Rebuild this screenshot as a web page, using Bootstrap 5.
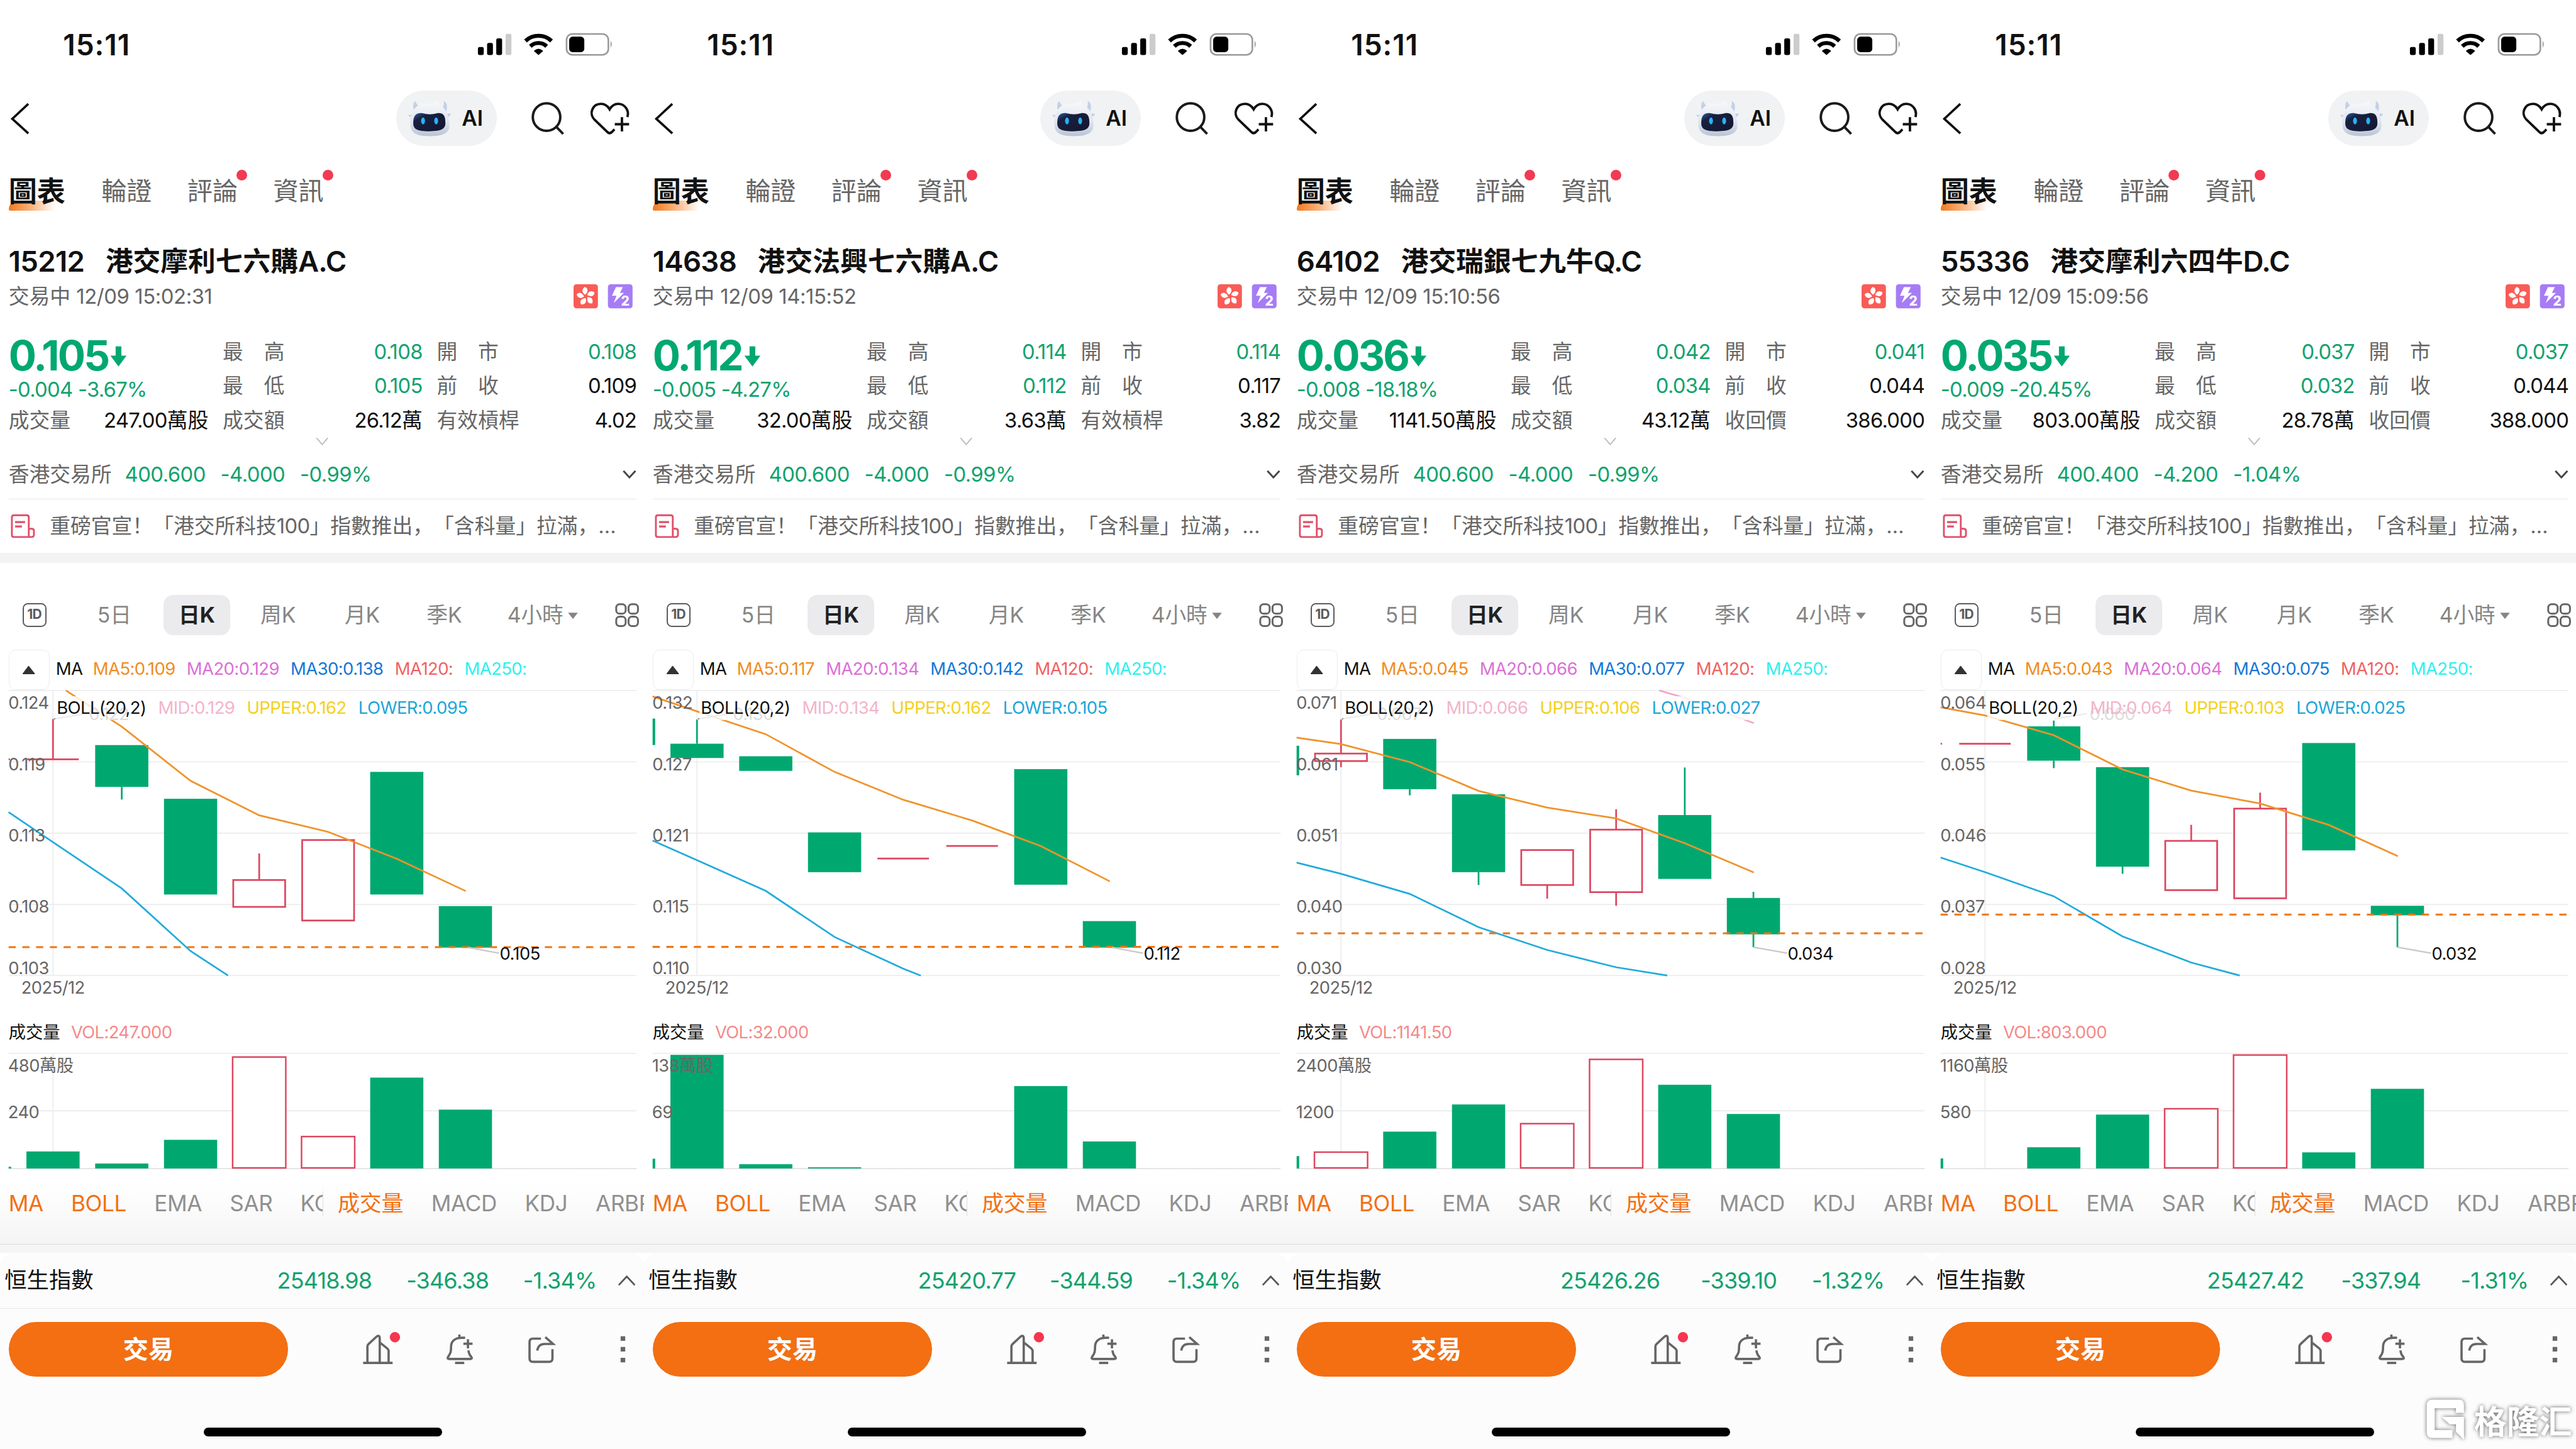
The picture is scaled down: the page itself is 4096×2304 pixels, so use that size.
<!DOCTYPE html>
<html lang="zh-Hant">
<head>
<meta charset="utf-8">
<meta name="viewport" content="width=device-width, initial-scale=1">
<title>交易</title>
<link href="https://cdn.jsdelivr.net/npm/bootstrap@5.3.0/dist/css/bootstrap.min.css" rel="stylesheet">
<style>
/* 1rem = 10 design units */
html{font-size:9.11032px}
body{font-family:Inter,"Noto Sans CJK TC",sans-serif;font-size:3.6rem;line-height:1;color:#111;background:#fff;overflow:hidden}
svg{display:block;flex:none;overflow:visible}
.phone{height:252.9rem;overflow:hidden;white-space:nowrap}
.num{letter-spacing:-.022em}
.up-green{color:#12a36e}
.price-green{color:#00a870}
.muted6{color:#666}
.statusbar{height:15.6rem;padding:0 5.3rem 0 11rem}
.clock{font-size:5.05rem;font-weight:600;letter-spacing:.022em}
.topnav{height:10.1rem;padding:0 2.3rem 0 1.6rem}
.ai-pill{width:17.5rem;height:9.6rem;background:#f0f2f4;font-size:3.7rem;font-weight:600;margin-right:5.9rem;padding-left:1.9rem}
.pagetabs{height:15.4rem;padding-left:1.5rem;gap:6.2rem;font-size:4.4rem;color:#666}
.pagetabs .current{font-size:4.95rem;font-weight:700;color:#111;margin-right:.1rem}
.pagetabs .current::before{content:"";position:absolute;left:0;bottom:-.9rem;width:8.2rem;height:1.8rem;border-radius:1.6rem 0 0 .3rem;background:linear-gradient(90deg,#f27a1e,#f9b681 50%,rgba(255,255,255,0));z-index:-1}
.pagetabs .current{z-index:0}
.reddot{position:absolute;width:1.9rem;height:1.9rem;border-radius:50%;background:#f23a52;right:-1.7rem;top:-1.6rem}
.titleline{height:9rem;padding-left:1.5rem;font-size:4.8rem;font-weight:700}
.titleline .code{font-weight:600;font-size:5rem;letter-spacing:-.015em;margin-right:3.7rem}
.titleline .lat{font-weight:600;font-size:5rem;letter-spacing:-.02em}
.subline{height:3.2rem;padding:0 2rem 0 1.5rem}
.subline .num{letter-spacing:-.012em}
.quote{padding:5.15rem 1.3rem 0 1.5rem;gap:2.5rem}
.quote>div{flex:1 1 0;min-width:0}
.qcell{height:5.95rem}
.bigprice{height:7.3rem;font-size:7.2rem;font-weight:700;letter-spacing:-.043em}
.change{height:4.6rem}
.more{height:1.3rem}
.underlying{height:9.55rem;margin:0 1.3rem 0 1.5rem;padding-top:1.05rem;border-bottom:.2rem solid #e8e8e8}
.underlying .num{letter-spacing:-.016em}
.newsline{height:9.35rem;padding-left:2rem;font-family:Inter,"Noto Sans CJK SC",sans-serif;text-spacing-trim:space-all}
.band{height:1.8rem;background:#f3f3f3}
.periods{height:15.1rem;padding:5.6rem .9rem 2.6rem 3.9rem;color:#858585;font-size:3.7rem}
.periods>*{flex:none}
.periods .active{width:11.6rem;height:6.95rem;border-radius:1.7rem;background:#ebebed;color:#222;font-weight:700}
.oned{width:4.2rem;height:4.2rem;border:.3rem solid #5c5c5c;border-radius:.9rem;font-size:2.3rem;font-weight:700;color:#5c5c5c;letter-spacing:-.03em}
.legendrow{height:7.05rem;padding-left:1.5rem;font-size:3.02rem;gap:2rem}
.legendrow>span:not(.fold){margin-top:-.25rem}
.legendrow .fold{width:7.15rem;height:7.05rem;border:.18rem solid #ececec;border-radius:1.2rem;margin-right:-.9rem}
.bollrow{position:absolute;left:9.7rem;top:1.1rem;right:1.3rem;height:4.15rem;padding-left:.2rem;background:rgba(255,255,255,.8);font-size:3.02rem;gap:2.1rem}
.volhead{height:7.7rem;padding:.7rem 0 0 1.5rem;font-size:3rem;gap:1.9rem}
.c-ma5{color:#ee8d22}.c-ma20{color:#da70d6}.c-ma30{color:#1577d6}.c-ma120{color:#f06262}.c-ma250{color:#30efef}
.c-mid{color:#f3b4ca}.c-upper{color:#f4d020}.c-lower{color:#1ca6d8}.c-vol{color:#f48a8a}
.plot text{font-family:Inter,"Noto Sans CJK TC",sans-serif;font-size:30px;letter-spacing:-.6px;fill:#666}
.studies{height:12.6rem;padding:0 0 1.4rem 1.5rem;font-size:3.85rem;color:#909090;background:linear-gradient(180deg,#fff,#fdfdfd 35%,#f4f4f4);letter-spacing:-.01em}
.studies .left-list{flex:none;width:54.95rem;height:4.4rem;border-right:.2rem solid #ddd}
.studies .on{color:#f37012}
.studies span{flex:none}
.gap-strip{height:1.6rem;background:#f5f5f5;border-top:.15rem solid #dcdcdc}
.sheet{background:#fdfcfd;height:34.2rem;border-radius:2.4rem 2.4rem 0 0}
.indexbar{height:9.7rem;padding:0 1.4rem 0 .8rem;font-size:3.88rem;border-bottom:.15rem solid #e8e8e8}
.indexbar .num{font-size:3.95rem;text-align:right}
.actions{height:14.3rem;padding:0 3.2rem 0 1.5rem}
.trade{width:48.8rem;height:9.5rem;border-radius:4.75rem;background:#f36f12;color:#fff;font-size:4.4rem;font-weight:700;line-height:1;padding:0;border:0}
.homebar{width:41.6rem;height:1.55rem;border-radius:.8rem;background:#000;margin:6.45rem auto 0 35.6rem}
.wm{position:absolute;left:423.2rem;top:243.8rem;color:#fff;font:700 5.7rem/1 "Noto Sans CJK SC",sans-serif;gap:1.4rem;filter:drop-shadow(0 0 .35rem rgba(0,0,0,.62))}
</style>
</head>
<body>
<main class="position-relative">
<div class="row g-0 flex-nowrap" id="board"></div>
<div class="wm d-flex align-items-center">
<svg style="width:7.2rem;height:8rem" viewBox="4232 2440 72 80"><path fill="#fff" d="M4246 2445H4292Q4301 2445 4301 2454V2468H4287V2460H4250V2498H4281V2512H4246Q4236 2512 4236 2502V2455Q4236 2445 4246 2445ZM4262 2475H4301V2515L4287 2501V2488H4276Z"/></svg>
<span>格隆汇</span></div>
</main>
<script>
const X=[92.5,212.5,332.6,452.4,572.7,692.5,812.3];
const G='#00a870',R='#dc4660';
/* candle: [kind, top, bottom, high, low]; kind g = filled, r = hollow, d = flat */
const stocks=[
{code:'15212',cn:'港交摩利七六購',lat:'A.C',time:'12/09 15:02:31',px:'0.105',chg:'-0.004',pct:'-3.67%',hi:'0.108',open:'0.108',lo:'0.105',prev:'0.109',vol:'247.00',amt:'26.12',lab:'有效槓桿',lv:'4.02',
 und:['400.600','-4.000','-0.99%'],ma:['0.109','0.129','0.138'],boll:['0.129','0.162','0.095'],axis:['0.124','0.119','0.113','0.108','0.103'],
 sl:['d',1325.6],k:[['d',1325.6,1325.6,1255.3,0],['g',1300.8,1373.8,0,1395.8],['g',1394.5,1561.6],['r',1536.3,1583.2,1490,0],['r',1466.5,1607],['g',1347.6,1561.6],['g',1581.8,1654.3]],
 dash:1653.4,low:['0.105',817,1654],high:['0.122',155,94],
 m5:'115,1205.5 212.5,1268.6 332.6,1363.2 452.4,1423.4 572.7,1452.3 692.5,1499.1 813,1555.6',
 lw:'15,1417.9 92.5,1470.2 212.5,1551 332.6,1660.3 398,1703',
 vt:'247.000',va:['480萬股','240'],vs:2037,v:[['g',2010.3],['g',2031.4],['g',1990],['r',1845.5],['r',1984.3],['g',1881.4],['g',1937.3]],idx:['25418.98','-346.38','-1.34%']},
{code:'14638',cn:'港交法興七六購',lat:'A.C',time:'12/09 14:15:52',px:'0.112',chg:'-0.005',pct:'-4.27%',hi:'0.114',open:'0.114',lo:'0.112',prev:'0.117',vol:'32.00',amt:'3.63',lab:'有效槓桿',lv:'3.82',
 und:['400.600','-4.000','-0.99%'],ma:['0.117','0.134','0.142'],boll:['0.134','0.162','0.105'],axis:['0.132','0.127','0.121','0.115','0.110'],
 sl:['g',1254.5,1300.7],k:[['g',1298.4,1323.3,1256.2,0],['g',1320.3,1345.8],['g',1453.2,1522.6],['d',1498.8,1498.8],['d',1476.9,1476.9],['g',1342.8,1544.5],['g',1608,1654.2]],
 dash:1653,low:['0.112',817,1654],high:['0.130',155,94],
 m5:'15,1215.9 92.5,1242 212.5,1281.8 332.6,1347.6 452.4,1396.2 572.7,1432.4 692.5,1476.9 813,1538.6',
 lw:'15,1467.4 92.5,1501.8 212.5,1555.2 332.6,1635.8 452.4,1691 483,1703',
 vt:'32.000',va:['138萬股','69'],vs:2023,v:[['g',1841.7],['g',2032.6],['g',2038],0,0,['g',1896.2],['g',1992.9]],idx:['25420.77','-344.59','-1.34%']},
{code:'64102',cn:'港交瑞銀七九牛',lat:'Q.C',time:'12/09 15:10:56',px:'0.036',chg:'-0.008',pct:'-18.18%',hi:'0.042',open:'0.041',lo:'0.034',prev:'0.044',vol:'1141.50',amt:'43.12',lab:'收回價',lv:'386.000',
 und:['400.600','-4.000','-0.99%'],ma:['0.045','0.066','0.077'],boll:['0.066','0.106','0.027'],axis:['0.071','0.061','0.051','0.040','0.030'],
 sl:['g',1301.9,1353.5],k:[['r',1315.6,1328.6,1256.2,1339.3],['g',1290,1377.8,0,1388.5],['g',1386.7,1522.6,0,1545],['r',1484,1545,0,1568.8],['r',1448.4,1557.5,1412.8,1581.3],['g',1422.9,1534.4,1339.9,0],['g',1567.6,1631.1,1557,1653.6]],
 dash:1629.3,low:['0.034',812.5,1653.6],high:['0.067',155,94],
 m5:'15,1287.7 92.5,1299 212.5,1330.4 332.6,1380.8 452.4,1409.9 572.7,1428.9 692.5,1472.1 813,1523.2',
 lw:'15,1506 92.5,1525.5 212.5,1560.5 332.6,1618.6 452.4,1658.4 572.7,1688.6 662,1703',
 mid:'648,1205.5 692.5,1218.5 813,1262.5',
 vt:'1141.50',va:['2400萬股','1200'],vs:2018.4,v:[['r',2011.5],['g',1975.7],['g',1928.3],['r',1961.8],['r',1849.6],['g',1893.9],['g',1944.9]],idx:['25426.26','-339.10','-1.32%']},
{code:'55336',cn:'港交摩利六四牛',lat:'D.C',time:'12/09 15:09:56',px:'0.035',chg:'-0.009',pct:'-20.45%',hi:'0.037',open:'0.037',lo:'0.032',prev:'0.044',vol:'803.00',amt:'28.78',lab:'收回價',lv:'388.000',
 und:['400.400','-4.200','-1.04%'],ma:['0.043','0.064','0.075'],boll:['0.064','0.103','0.025'],axis:['0.064','0.055','0.046','0.037','0.028'],
 sl:['d',1298.4],k:[['d',1298.4,1298.4],['g',1268.1,1328,1258,1341],['g',1339.3,1513,0,1525.5],['r',1468,1554,1440,0],['r',1411.7,1568.2,1383.8,0],['g',1297.2,1484.6],['g',1581.3,1597.9,0,1653.6]],
 dash:1596.7,low:['0.032',812.5,1653.6],high:['0.060',275,214],
 m5:'15,1234.9 92.5,1249.1 212.5,1283.5 332.6,1343.4 452.4,1380.2 572.7,1402.8 692.5,1440.1 813,1494.7',
 lw:'15,1497 92.5,1522.6 212.5,1564.7 332.6,1634.7 452.4,1680.3 537,1703',
 vt:'803.000',va:['1160萬股','580'],vs:2022.5,v:[0,['g',2003],['g',1946],['r',1935.8],['r',1842],['g',2011.9],['g',1901]],idx:['25427.42','-337.94','-1.31%']}
];
const svg=(x,y,w,h,b,c='')=>`<svg class="${c}" style="width:${w/10}rem;height:${h/10}rem" viewBox="${x} ${y} ${w} ${h}" fill="none">${b}</svg>`;
const line=(x1,y1,x2,y2,c,w=2)=>`<line x1="${x1}" y1="${y1}" x2="${x2}" y2="${y2}" stroke="${c}" stroke-width="${w}"/>`;
function priceChart(s){
 let o='';
 [1205.5,1330,1454.5,1579,1703].forEach(y=>o+=line(15,y,1111,y,'#ededed',2));
 o+=line(92.5,1205,92.5,1703,'#ededed',2);
 if(s.sl[0]=='g')o+=`<rect x="15" y="${s.sl[1]}" width="4.5" height="${s.sl[2]-s.sl[1]}" fill="${G}"/>`;else o+=line(15,s.sl[1],17.5,s.sl[1],R,3);
 s.k.forEach((k,i)=>{const x=X[i],c=k[0]=='g'?G:R;
  if(k[3])o+=line(x,k[3],x,k[1],c,3);
  if(k[4])o+=line(x,k[2],x,k[4],c,3);
  if(k[0]=='g')o+=`<rect x="${x-46.4}" y="${k[1]}" width="92.8" height="${k[2]-k[1]}" fill="${G}"/>`;
  else if(k[0]=='r')o+=`<rect x="${x-45.3}" y="${k[1]}" width="90.6" height="${k[2]-k[1]}" stroke="${R}" stroke-width="3" fill="#fff"/>`;
  else o+=line(x-45,k[1],x+45,k[1],R,3);});
 o+=`<polyline points="${s.lw}" stroke="#22abdc" stroke-width="3"/><polyline points="${s.m5}" stroke="#f0932b" stroke-width="3"/>`;
 if(s.mid)o+=`<polyline points="${s.mid}" stroke="#f3a8c2" stroke-width="3"/>`;
 o+=`<line x1="15" y1="${s.dash}" x2="1108" y2="${s.dash}" stroke="#ea7818" stroke-width="3.4" stroke-dasharray="12.5 11.5"/>`;
 o+=line(s.low[1],s.low[2],871,1664,'#c8c8cc',2.5)+`<text x="872" y="1675.3" style="fill:#111">${s.low[0]}</text>`;
 o+=line(s.high[2],1255,s.high[1]-5,1246,'#999',2.5)+`<text x="${s.high[1]}" y="1257" style="fill:#555">${s.high[0]}</text>`;
 [1237,1344.5,1468.5,1592.8,1700.5].forEach((y,i)=>o+=`<text x="14.5" y="${y}">${s.axis[i]}</text>`);
 o+='<text x="37" y="1734.5">2025/12</text>';
 return svg(0,1204.5,1124,555.5,o,'plot');
}
function volChart(s){
 let o=line(15,1839,1111,1839,'#ededed')+line(15,1939.4,1111,1939.4,'#ededed')+line(92.5,1839,92.5,2040,'#ededed')+line(15,2040.3,1111,2040.3,'#e2e2e2');
 o+=`<rect x="15" y="${s.vs}" width="4.5" height="${2040-s.vs}" fill="${G}"/>`;
 s.v.forEach((v,i)=>{if(!v)return;const x=X[i];
  o+=v[0]=='g'?`<rect x="${x-46.4}" y="${v[1]}" width="92.8" height="${2040-v[1]}" fill="${G}"/>`:`<rect x="${x-46.4}" y="${v[1]}" width="92.8" height="${2039-v[1]}" stroke="${R}" stroke-width="2.7" fill="#fff"/>`;});
 o+=`<text x="14" y="1871">${s.va[0]}</text><text x="14" y="1952.500">${s.va[1]}</text>`;
 return svg(0,1837,1124,208,o,'plot');
}
const petals=[0,72,144,216,288].map(a=>`<path transform="rotate(${a-8} 1022.5 517)" fill="#fff" d="M1021.5 514C1016 509 1017 503.500 1023 500.500C1029 504 1027.500 510 1021.500 514Z"/>`).join('');
const robot=`<defs><linearGradient id="hd" x1="0" y1="0" x2="0" y2="1"><stop offset="0" stop-color="#f8f9fb"/><stop offset=".6" stop-color="#e0e5ef"/><stop offset="1" stop-color="#b9c4d6"/></linearGradient><linearGradient id="fc" x1="0" y1="0" x2="1" y2="1"><stop offset="0" stop-color="#2f62a8"/><stop offset=".25" stop-color="#18203f"/><stop offset="1" stop-color="#15162e"/></linearGradient></defs>
<path d="M722 192Q719 182 724 176Q729 183 731 189ZM771 190Q776 183 774 176Q782 179 779 194Z" fill="#c3d0e6"/><path d="M712 200H722V206Q715 204 712 200ZM787 198H778V206Q785 203 787 198Z" fill="#c3cee2"/>
<path d="M716 214C715 197 724 181 742 180Q755 182 764 175Q765 180 762 182C776 184 783 198 784 214C785 226 782 237 750 237C718 237 716 226 716 214Z" fill="url(#hd)"/>
<path d="M721 214C721 199 728 196 737 197Q750 201 763 197C772 196 777 200 777 212C778 224 772 228.500 749 228.500C726 228.500 721 224 721 214Z" fill="url(#fc)"/><ellipse cx="738" cy="210.500" rx="3.400" ry="6" fill="#27b2fa"/><ellipse cx="761" cy="210.500" rx="3.400" ry="6" fill="#27b2fa"/>`;
const sg=(c,v)=>`<span class="num ${c}">${v}</span>`;
const lab=(t)=>`<span class="muted6">${t}</span>`;
const cell=(l,v)=>`<div class="qcell d-flex align-items-center justify-content-between">${l}${v}</div>`;
const S='stroke="#666" stroke-width="4" stroke-linejoin="round"';
document.getElementById('board').innerHTML=stocks.map(s=>`
<section class="col-3 phone d-flex flex-column">
 <div class="statusbar d-flex align-items-center justify-content-between"><span class="clock">15:11</span>
 ${svg(833,56,238,44,`<g fill="#000"><rect x="834" y="82" width="10.200" height="14" rx="3"/><rect x="850" y="75" width="10.200" height="21" rx="3"/><rect x="866" y="67" width="10.200" height="29" rx="3"/><rect x="882.300" y="59" width="10.200" height="37" rx="3" fill="#ccc"/><path d="M931.500 89Q939.700 81 948 89L939.700 96Z"/></g><path d="M917 71.500A33 33 0 0 1 962.500 71.500M925.500 80.800A20.500 20.500 0 0 1 954 80.800" stroke="#000" stroke-width="7"/><rect x="988.700" y="59.200" width="73" height="36.600" rx="10.500" stroke="#999" stroke-width="2.800"/><rect x="993.300" y="64" width="26.400" height="27" rx="6" fill="#000"/><path d="M1065.500 71.500Q1070 77.500 1065.500 83.500Z" fill="#999"/>`)}</div>
 <div class="topnav d-flex align-items-center">${svg(16,178,38,58,'<path d="M49 181.500L21 207.500L49 233" stroke="#111" stroke-width="4"/>')}
 <div class="ai-pill rounded-pill ms-auto d-flex align-items-center">${svg(711,174,76,64,robot)}<span style="margin-left:1.9rem">AI</span></div>
 ${svg(926,178,60,58,'<circle cx="953.500" cy="204.500" r="24" stroke="#1a1a1a" stroke-width="4.300"/><path d="M970 221L982.500 234" stroke="#1a1a1a" stroke-width="4.300"/>')}
 <div style="width:4.3rem"></div>${svg(1029,178,72,58,'<path d="M1095.500 204.500C1099.500 192 1090 181.500 1079.500 181.500C1073 181.500 1068 185 1064.500 191C1061 185 1056 181.500 1049.500 181.500C1034 181.500 1028 199 1038 209L1060.500 230.500Q1064.500 234.500 1068.500 230.500L1073 226M1086 204.500V229.500M1073.500 217H1098.500" stroke="#111" stroke-width="4.200"/>')}</div>
 <nav class="pagetabs d-flex align-items-center"><span class="current position-relative">圖表</span><span>輪證</span><span class="position-relative">評論<i class="reddot"></i></span><span class="position-relative">資訊<i class="reddot"></i></span></nav>
 <div class="titleline d-flex align-items-center"><span class="code">${s.code}</span><span>${s.cn}</span><span class="lat">${s.lat}</span></div>
 <div class="subline d-flex align-items-center justify-content-between"><span class="muted6">交易中 <span class="num">${s.time}</span></span>
 ${svg(1001,496,103,42,`<rect x="1001" y="496" width="42.500" height="42" rx="5" fill="#f95c56"/>${petals}<rect x="1061" y="496" width="43" height="42" rx="5" fill="#a67cf5"/><path d="M1075 501H1087L1082 511H1089L1071 529L1076 516H1068Z" fill="#fff"/><text x="1084" y="533" font-size="23" font-weight="800" fill="#fff" stroke="#a67cf5" stroke-width="3" paint-order="stroke">2</text>`)}</div>
 <div class="quote d-flex">
  <div><div class="bigprice price-green d-flex align-items-center">${s.px}${svg(196,600,34,36,'<path d="M209 602H219V618H228L214 637L200 618H209Z" fill="#00a870"/>')}</div><div class="change d-flex align-items-center up-green"><span class="num">${s.chg} ${s.pct}</span></div>${cell(lab('成交量'),`<span><span class="num">${s.vol}</span>萬股</span>`)}</div>
  <div>${cell(lab('最　高'),sg('up-green',s.hi))}${cell(lab('最　低'),sg('up-green',s.lo))}${cell(lab('成交額'),`<span><span class="num">${s.amt}</span>萬</span>`)}</div>
  <div>${cell(lab('開　市'),sg('up-green',s.open))}${cell(lab('前　收'),sg('',s.prev))}${cell(lab(s.lab),sg('',s.lv))}</div>
 </div>
 <div class="more d-flex justify-content-center">${svg(552,762,22,14,'<path d="M553.500 763.500L563.300 775L573 763.500" stroke="#bbb" stroke-width="2"/>')}</div>
 <div class="underlying d-flex align-items-center">${lab('香港交易所')}<span class="num up-green" style="margin-left:2.3rem">${s.und[0]}</span><span class="num up-green" style="margin-left:2.6rem">${s.und[1]}</span><span class="num up-green" style="margin-left:2.6rem">${s.und[2]}</span><span class="ms-auto">${svg(1087,819,25,18,'<path d="M1089.500 822L1100 833.500L1110.500 822" stroke="#444" stroke-width="3.200"/>')}</span></div>
 <div class="newsline d-flex align-items-center muted6" lang="zh-Hans">${svg(20,896,42,43,'<path d="M24.500 898.500H47Q50.500 898.500 50.500 902V936.500H24.500Q21 936.500 21 933V902Q21 898.500 24.500 898.500ZM50.500 922H55.500Q59.500 922 59.500 926V932.500Q59.500 936.500 55.500 936.500H50" stroke="#e0506a" stroke-width="3.200"/><path d="M26.500 910.500H44M26.500 918H38.500" stroke="#e0506a" stroke-width="3.500"/>')}<span style="margin-left:2.5rem">重磅官宣！「港交所科技<span class="num">100</span>」指數推出，「含科量」拉滿，…</span></div>
 <div class="band"></div>
 <div class="periods d-flex align-items-center"><span class="oned d-flex align-items-center justify-content-center" style="margin-right:8.900rem">1D</span><span style="width:11.550rem">5日</span><span class="active d-flex align-items-center justify-content-center">日K</span><span style="margin-left:5.300rem;width:14.700rem">周K</span><span style="width:14.300rem">月K</span><span style="width:14.100rem">季K</span><span class="d-flex align-items-center">4小時${svg(990,1066,28,16,'<path d="M998 1069.500H1015L1006.500 1080.500Z" fill="#858585"/>')}</span><span class="ms-auto">
 ${svg(1073,1054,42,42,['1075 1056','1096.500 1056','1075 1077.500','1096.500 1077.500'].map(p=>{const[a,b]=p.split(' ');return`<rect x="${a}" y="${b}" width="16.500" height="16.500" rx="6" stroke="#666" stroke-width="3.300"/>`}).join(''))}</span></div>
 <div class="legendrow d-flex align-items-center num"><span class="fold d-flex align-items-center justify-content-center">${svg(39,1161,24,16,'<path d="M41 1175.500L50.500 1163L60.500 1175.500Z" fill="#333" stroke="#333" stroke-width="2" stroke-linejoin="round"/>')}</span><span>MA</span><span class="c-ma5" style="margin-left:-.2rem">MA5:${s.ma[0]}</span><span class="c-ma20">MA20:${s.ma[1]}</span><span class="c-ma30">MA30:${s.ma[2]}</span><span class="c-ma120">MA120:</span><span class="c-ma250">MA250:</span></div>
 <div class="position-relative">${priceChart(s)}<div class="bollrow d-flex align-items-center num"><span>BOLL(20,2)</span><span class="c-mid">MID:${s.boll[0]}</span><span class="c-upper">UPPER:${s.boll[1]}</span><span class="c-lower">LOWER:${s.boll[2]}</span></div></div>
 <div class="volhead d-flex align-items-center"><span>成交量</span><span class="c-vol num">VOL:${s.vt}</span></div>
 ${volChart(s)}
 <div class="studies d-flex align-items-center"><div class="left-list d-flex align-items-center overflow-hidden" style="gap:4.850rem"><span class="on">MA</span><span class="on">BOLL</span><span>EMA</span><span>SAR</span><span>KC</span></div><div class="d-flex" style="gap:4.900rem;margin-left:2.500rem"><span class="on">成交量</span><span>MACD</span><span>KDJ</span><span>ARBR</span></div></div>
 <div class="gap-strip"></div>
 <div class="sheet"><div class="indexbar d-flex align-items-center"><span class="me-auto">恒生指數</span><span class="num up-green">${s.idx[0]}</span><span class="num up-green" style="width:20.400rem">${s.idx[1]}</span><span class="num up-green" style="width:18.800rem">${s.idx[2]}</span><span style="margin-left:3.700rem">${svg(1078,2226,32,20,'<path d="M1080 2244L1094 2229L1108 2244" stroke="#555" stroke-width="3"/>')}</span></div>
 <div class="actions d-flex align-items-center justify-content-between"><button class="btn trade">交易</button>
 ${svg(632,2326,460,60,`<g ${S}><path d="M633.500 2380H685M641 2380V2351Q641 2349 643 2347L657 2334Q662.500 2330.500 662.500 2337V2380M663 2344.500L676 2355Q678 2357 678 2359V2380"/><path d="M794 2380H810M811.500 2336H806C794 2336 787 2342 787 2352C787 2361 786 2363 782 2369Q779.500 2373 784 2373H820Q825 2373 822 2369C818 2364 817.500 2362 817.500 2358M801.500 2330.500V2336M816.500 2338.500V2354.500M808.500 2346.500H824.500"/><path d="M944 2337.500H930Q924 2337.500 924 2343.500V2372Q924 2378 930 2378H958Q964 2378 964 2372V2356M937.500 2358.500Q939 2347 950 2346.800"/></g><path d="M949 2346.800H965L951.500 2335" stroke="#666" stroke-width="4"/><circle cx="689" cy="2335" r="9" fill="#f6364f"/><path d="M1083 2333.500h8v8h-8zM1083 2352h8v8h-8zM1083 2371h8v8h-8z" fill="#666"/>`)}</div>
 <div class="homebar"></div></div>
</section>`).join('');
</script>
<script src="https://cdn.jsdelivr.net/npm/bootstrap@5.3.0/dist/js/bootstrap.bundle.min.js"></script>
</body>
</html>
